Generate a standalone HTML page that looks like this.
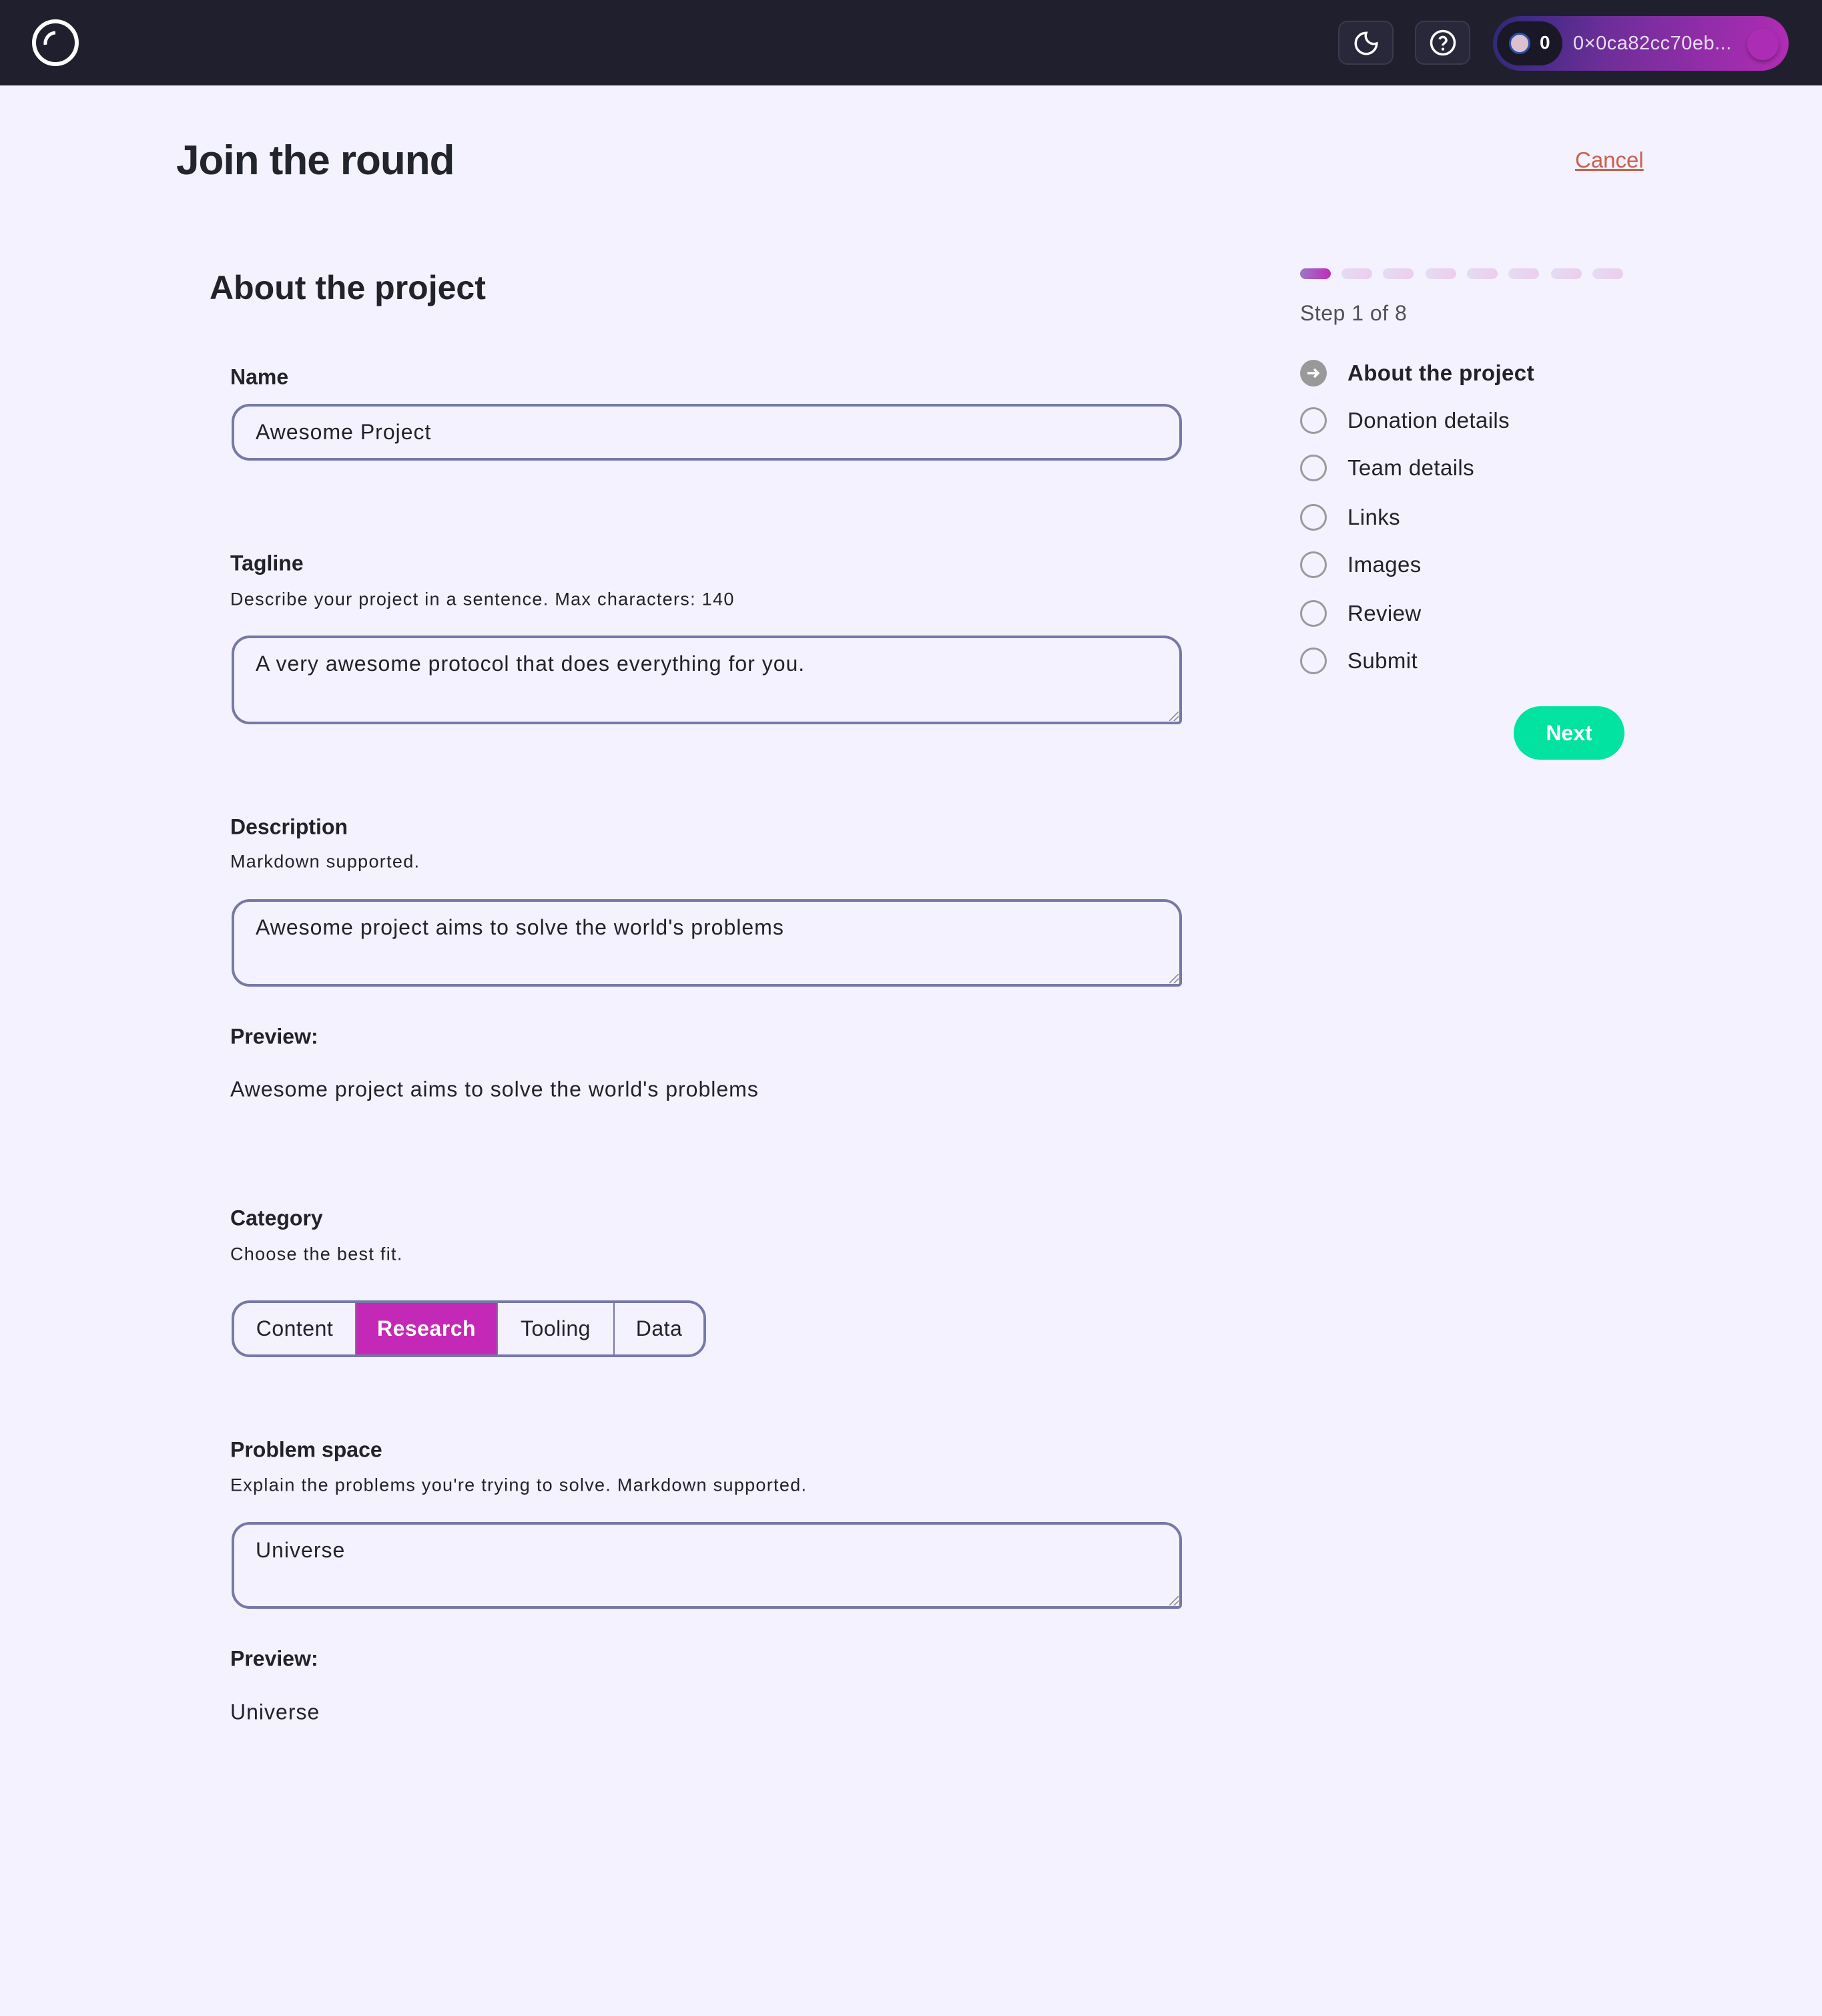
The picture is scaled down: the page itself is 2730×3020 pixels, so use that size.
<!DOCTYPE html>
<html><head><meta charset="utf-8"><style>
*{margin:0;padding:0;box-sizing:border-box}
body{width:2730px;height:3020px;background:#f3f2fe;font-family:"Liberation Sans",sans-serif;color:#22222b;position:relative;overflow:hidden}
.a{position:absolute;white-space:nowrap}
.hdr{position:absolute;left:0;top:0;width:2730px;height:128px;background:#201f2d}
.lbl{position:absolute;left:345px;font-size:32px;font-weight:bold;color:#22222b;transform:translateY(-50%)}
.sub{position:absolute;left:345px;font-size:27px;color:#22222b;transform:translateY(-50%);letter-spacing:1.3px}
.inp{position:absolute;left:347px;width:1424px;border:4px solid #7678a8;border-radius:27px;font-size:32px;padding-left:32px;letter-spacing:1px}
.ta{border-bottom-right-radius:6px}
.txt{position:absolute;left:345px;font-size:32px;transform:translateY(-50%);letter-spacing:1px}
.bar{position:absolute;top:402px;width:46px;height:16px;border-radius:8px;background:linear-gradient(90deg,#e4dcf2,#edcdee)}
.stc{position:absolute;left:1948px;width:40px;height:40px;border:3px solid #9a9a9a;border-radius:50%}
.stt{position:absolute;left:2019px;font-size:33px;transform:translateY(-50%);letter-spacing:0.4px}
.seg{position:absolute;top:1948px;height:85px;display:flex;align-items:center;justify-content:center;font-size:32px;letter-spacing:0.5px}
.rz{position:absolute;width:14px;height:14px;background:linear-gradient(135deg,transparent 45%,#888 47%,#888 53%,transparent 55%,transparent 70%,#888 72%,#888 78%,transparent 80%)}
</style></head><body>
<div class="hdr"></div>
<svg class="a" style="left:46px;top:27px" width="74" height="74" viewBox="0 0 74 74"><circle cx="37" cy="37" r="32" fill="none" stroke="#fff" stroke-width="6"/><path d="M22 40 A16 16 0 0 1 37 22" fill="none" stroke="#fff" stroke-width="5"/></svg>
<div class="a" style="left:2005px;top:31px;width:83px;height:66px;border:2px solid #3b3a4d;border-radius:14px;background:#29283a"></div>
<svg class="a" style="left:2026px;top:44px" width="42" height="42" viewBox="0 0 24 24"><path d="M12 3a7 7 0 0 0 9 9 9 9 0 1 1-9-9z" fill="none" stroke="#fff" stroke-width="2"/></svg>
<div class="a" style="left:2120px;top:31px;width:83px;height:66px;border:2px solid #3b3a4d;border-radius:14px;background:#29283a"></div>
<svg class="a" style="left:2141px;top:43px" width="42" height="42" viewBox="0 0 24 24"><circle cx="12" cy="12" r="10" fill="none" stroke="#fff" stroke-width="2"/><path d="M9.1 9a3 3 0 0 1 5.8 1c0 2-3 2.5-3 4.5" fill="none" stroke="#fff" stroke-width="2"/><circle cx="12" cy="17.5" r="1.2" fill="#fff"/></svg>
<div class="a" style="left:2237px;top:24px;width:443px;height:82px;border-radius:41px;background:linear-gradient(100deg,#2c2a78,#6f2e9a 40%,#b22cb4)"></div>
<div class="a" style="left:2243px;top:32px;width:98px;height:66px;border-radius:33px;background:#1a1826"></div>
<div class="a" style="left:2261px;top:49px;width:32px;height:32px;border-radius:50%;background:#dcc0d0;border:3px solid #2d4fa6"></div>
<div class="a" style="left:2307px;top:48px;font-size:28px;font-weight:bold;color:#fff">0</div>
<div class="a" style="left:2357px;top:49px;font-size:29px;color:#e8dcf2;letter-spacing:0.5px">0×0ca82cc70eb...</div>
<div class="a" style="left:2618px;top:43px;width:47px;height:47px;border-radius:50%;background:#ad2cb5;box-shadow:0 3px 6px rgba(0,0,0,.3)"></div>

<div class="a" style="left:264px;top:205px;font-size:62px;font-weight:bold;color:#22252b;letter-spacing:-1px">Join the round</div>
<div class="a" style="left:2360px;top:221px;font-size:33px;color:#c8604d;text-decoration:underline">Cancel</div>
<div class="a" style="left:314px;top:402px;font-size:50px;font-weight:bold;color:#22222b">About the project</div>

<div class="lbl" style="top:565px">Name</div>
<div class="inp" style="top:605px;height:85px;line-height:77px">Awesome Project</div>

<div class="lbl" style="top:844px">Tagline</div>
<div class="sub" style="top:898px">Describe your project in a sentence. Max characters: 140</div>
<div class="inp ta" style="top:952px;height:133px;padding-top:20px">A very awesome protocol that does everything for you.</div>
<div class="rz" style="left:1752px;top:1066px"></div>

<div class="lbl" style="top:1239px">Description</div>
<div class="sub" style="top:1291px">Markdown supported.</div>
<div class="inp ta" style="top:1347px;height:131px;padding-top:20px">Awesome project aims to solve the world's problems</div>
<div class="rz" style="left:1752px;top:1459px"></div>
<div class="lbl" style="top:1553px">Preview:</div>
<div class="txt" style="top:1632px">Awesome project aims to solve the world's problems</div>

<div class="lbl" style="top:1825px">Category</div>
<div class="sub" style="top:1879px">Choose the best fit.</div>
<div class="a" style="left:347px;top:1948px;width:711px;height:85px;border:4px solid #7678a8;border-radius:27px"></div>
<div class="seg" style="left:351px;width:181px">Content</div>
<div class="seg" style="left:534px;width:210px;top:1952px;height:77px;background:#c428b6;color:#fff;font-weight:bold">Research</div>
<div class="a" style="left:744px;top:1950px;width:2px;height:81px;background:#7678a8"></div>
<div class="seg" style="left:746px;width:173px">Tooling</div>
<div class="a" style="left:919px;top:1950px;width:2px;height:81px;background:#7678a8"></div>
<div class="seg" style="left:921px;width:133px">Data</div>
<div class="a" style="left:532px;top:1950px;width:2px;height:81px;background:#7678a8"></div>

<div class="lbl" style="top:2172px">Problem space</div>
<div class="sub" style="top:2225px">Explain the problems you're trying to solve. Markdown supported.</div>
<div class="inp ta" style="top:2280px;height:130px;padding-top:20px">Universe</div>
<div class="rz" style="left:1752px;top:2391px"></div>
<div class="lbl" style="top:2485px">Preview:</div>
<div class="txt" style="top:2565px">Universe</div>

<div class="bar" style="left:1948px;background:linear-gradient(90deg,#9a78c8,#c22cb8)"></div>
<div class="bar" style="left:2010px"></div>
<div class="bar" style="left:2072px"></div>
<div class="bar" style="left:2136px"></div>
<div class="bar" style="left:2198px"></div>
<div class="bar" style="left:2260px"></div>
<div class="bar" style="left:2324px"></div>
<div class="bar" style="left:2386px"></div>
<div class="a" style="left:1948px;top:451px;font-size:32px;color:#50505a;letter-spacing:0.5px">Step 1 of 8</div>

<div class="a" style="left:1948px;top:539px;width:40px;height:40px;border-radius:50%;background:#999"></div>
<svg class="a" style="left:1955px;top:546px" width="26" height="26" viewBox="0 0 26 26"><path d="M4 13h16M14 7l6 6-6 6" fill="none" stroke="#fff" stroke-width="3.5"/></svg>
<div class="stt" style="top:559px;font-weight:bold">About the project</div>
<div class="stc" style="top:610px"></div><div class="stt" style="top:630px">Donation details</div>
<div class="stc" style="top:681px"></div><div class="stt" style="top:701px">Team details</div>
<div class="stc" style="top:755px"></div><div class="stt" style="top:775px">Links</div>
<div class="stc" style="top:826px"></div><div class="stt" style="top:846px">Images</div>
<div class="stc" style="top:899px"></div><div class="stt" style="top:919px">Review</div>
<div class="stc" style="top:970px"></div><div class="stt" style="top:990px">Submit</div>

<div class="a" style="left:2268px;top:1058px;width:166px;height:80px;border-radius:40px;background:#02e2a0;color:#fff;font-weight:bold;font-size:32px;display:flex;align-items:center;justify-content:center">Next</div>
</body></html>
